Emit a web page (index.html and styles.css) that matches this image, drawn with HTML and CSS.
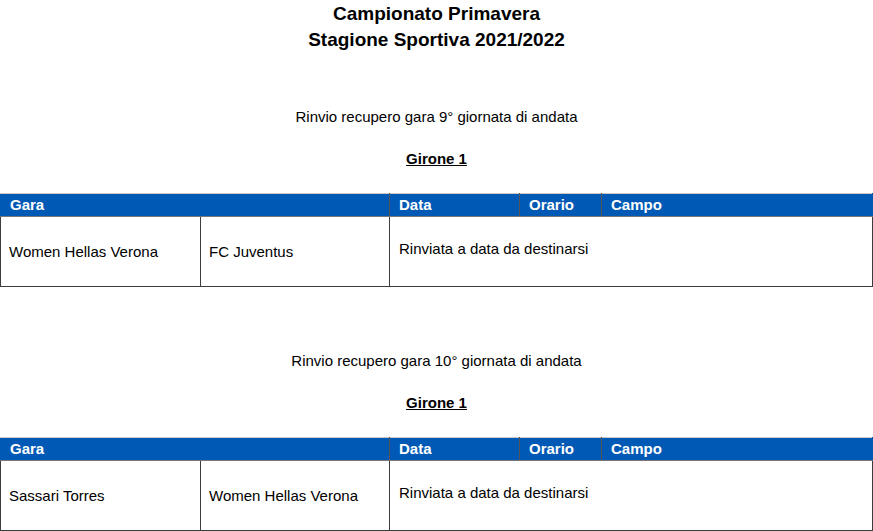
FILE: index.html
```html
<!DOCTYPE html>
<html lang="it">
<head>
<meta charset="utf-8">
<title>Campionato Primavera</title>
<link rel="stylesheet" href="styles.css">
</head>
<body>
<h1 class="title">Campionato Primavera<br>Stagione Sportiva 2021/2022</h1>

<section class="block">
  <p class="subtitle">Rinvio recupero gara 9° giornata di andata</p>
  <p class="girone">Girone 1</p>
  <table class="games">
    <colgroup>
      <col class="c-team1"><col class="c-team2"><col class="c-data"><col class="c-orario"><col class="c-campo">
    </colgroup>
    <thead>
      <tr><th colspan="2">Gara</th><th>Data</th><th>Orario</th><th>Campo</th></tr>
    </thead>
    <tbody>
      <tr><td>Women Hellas Verona</td><td>FC Juventus</td><td colspan="3" class="note">Rinviata a data da destinarsi</td></tr>
    </tbody>
  </table>
</section>

<section class="block second">
  <p class="subtitle">Rinvio recupero gara 10° giornata di andata</p>
  <p class="girone">Girone 1</p>
  <table class="games">
    <colgroup>
      <col class="c-team1"><col class="c-team2"><col class="c-data"><col class="c-orario"><col class="c-campo">
    </colgroup>
    <thead>
      <tr><th colspan="2">Gara</th><th>Data</th><th>Orario</th><th>Campo</th></tr>
    </thead>
    <tbody>
      <tr><td>Sassari Torres</td><td>Women Hellas Verona</td><td colspan="3" class="note">Rinviata a data da destinarsi</td></tr>
    </tbody>
  </table>
</section>
</body>
</html>
```

FILE: styles.css
```css
html, body {
  margin: 0;
  padding: 0;
  background: #fff;
}
body {
  font-family: "Liberation Sans", Arial, sans-serif;
  font-size: 15px;
  color: #000;
}
.title {
  margin: 0;
  padding-top: 1px;
  font-size: 19px;
  line-height: 26px;
  font-weight: bold;
  text-align: center;
}
.block {
  padding-top: 55px;
}
.block.second {
  padding-top: 65px;
}
.subtitle {
  margin: 0;
  line-height: 18px;
  text-align: center;
}
.girone {
  margin: 24px 0 25px;
  line-height: 18px;
  text-align: center;
  font-weight: bold;
  text-decoration: underline;
}
.games {
  width: 100%;
  table-layout: fixed;
  border-collapse: collapse;
}
.c-team1 { width: 200px; }
.c-team2 { width: 189px; }
.c-data { width: 130px; }
.c-orario { width: 82px; }
.c-campo { width: auto; }
.games th {
  background: #0059b5;
  color: #fff;
  font-weight: bold;
  text-align: left;
  height: 22px;
  padding: 0 0 0 9px;
  line-height: 20px;
  border-top: 1px solid #c8c8c8;
  border-bottom: 1px solid #777;
  border-left: 1px solid #555;
  border-right: 1px solid #555;
}
.games th:first-child { border-left-color: #0059b5; }
.games th:last-child { border-right-color: #0059b5; }
.games td {
  height: 69px;
  padding: 0 0 0 8px;
  vertical-align: middle;
  border: 1px solid #3c3c3c;
  border-top: none;
}
.games td.note {
  height: 62px;
  padding-bottom: 7px;
  padding-left: 9px;
}
```
